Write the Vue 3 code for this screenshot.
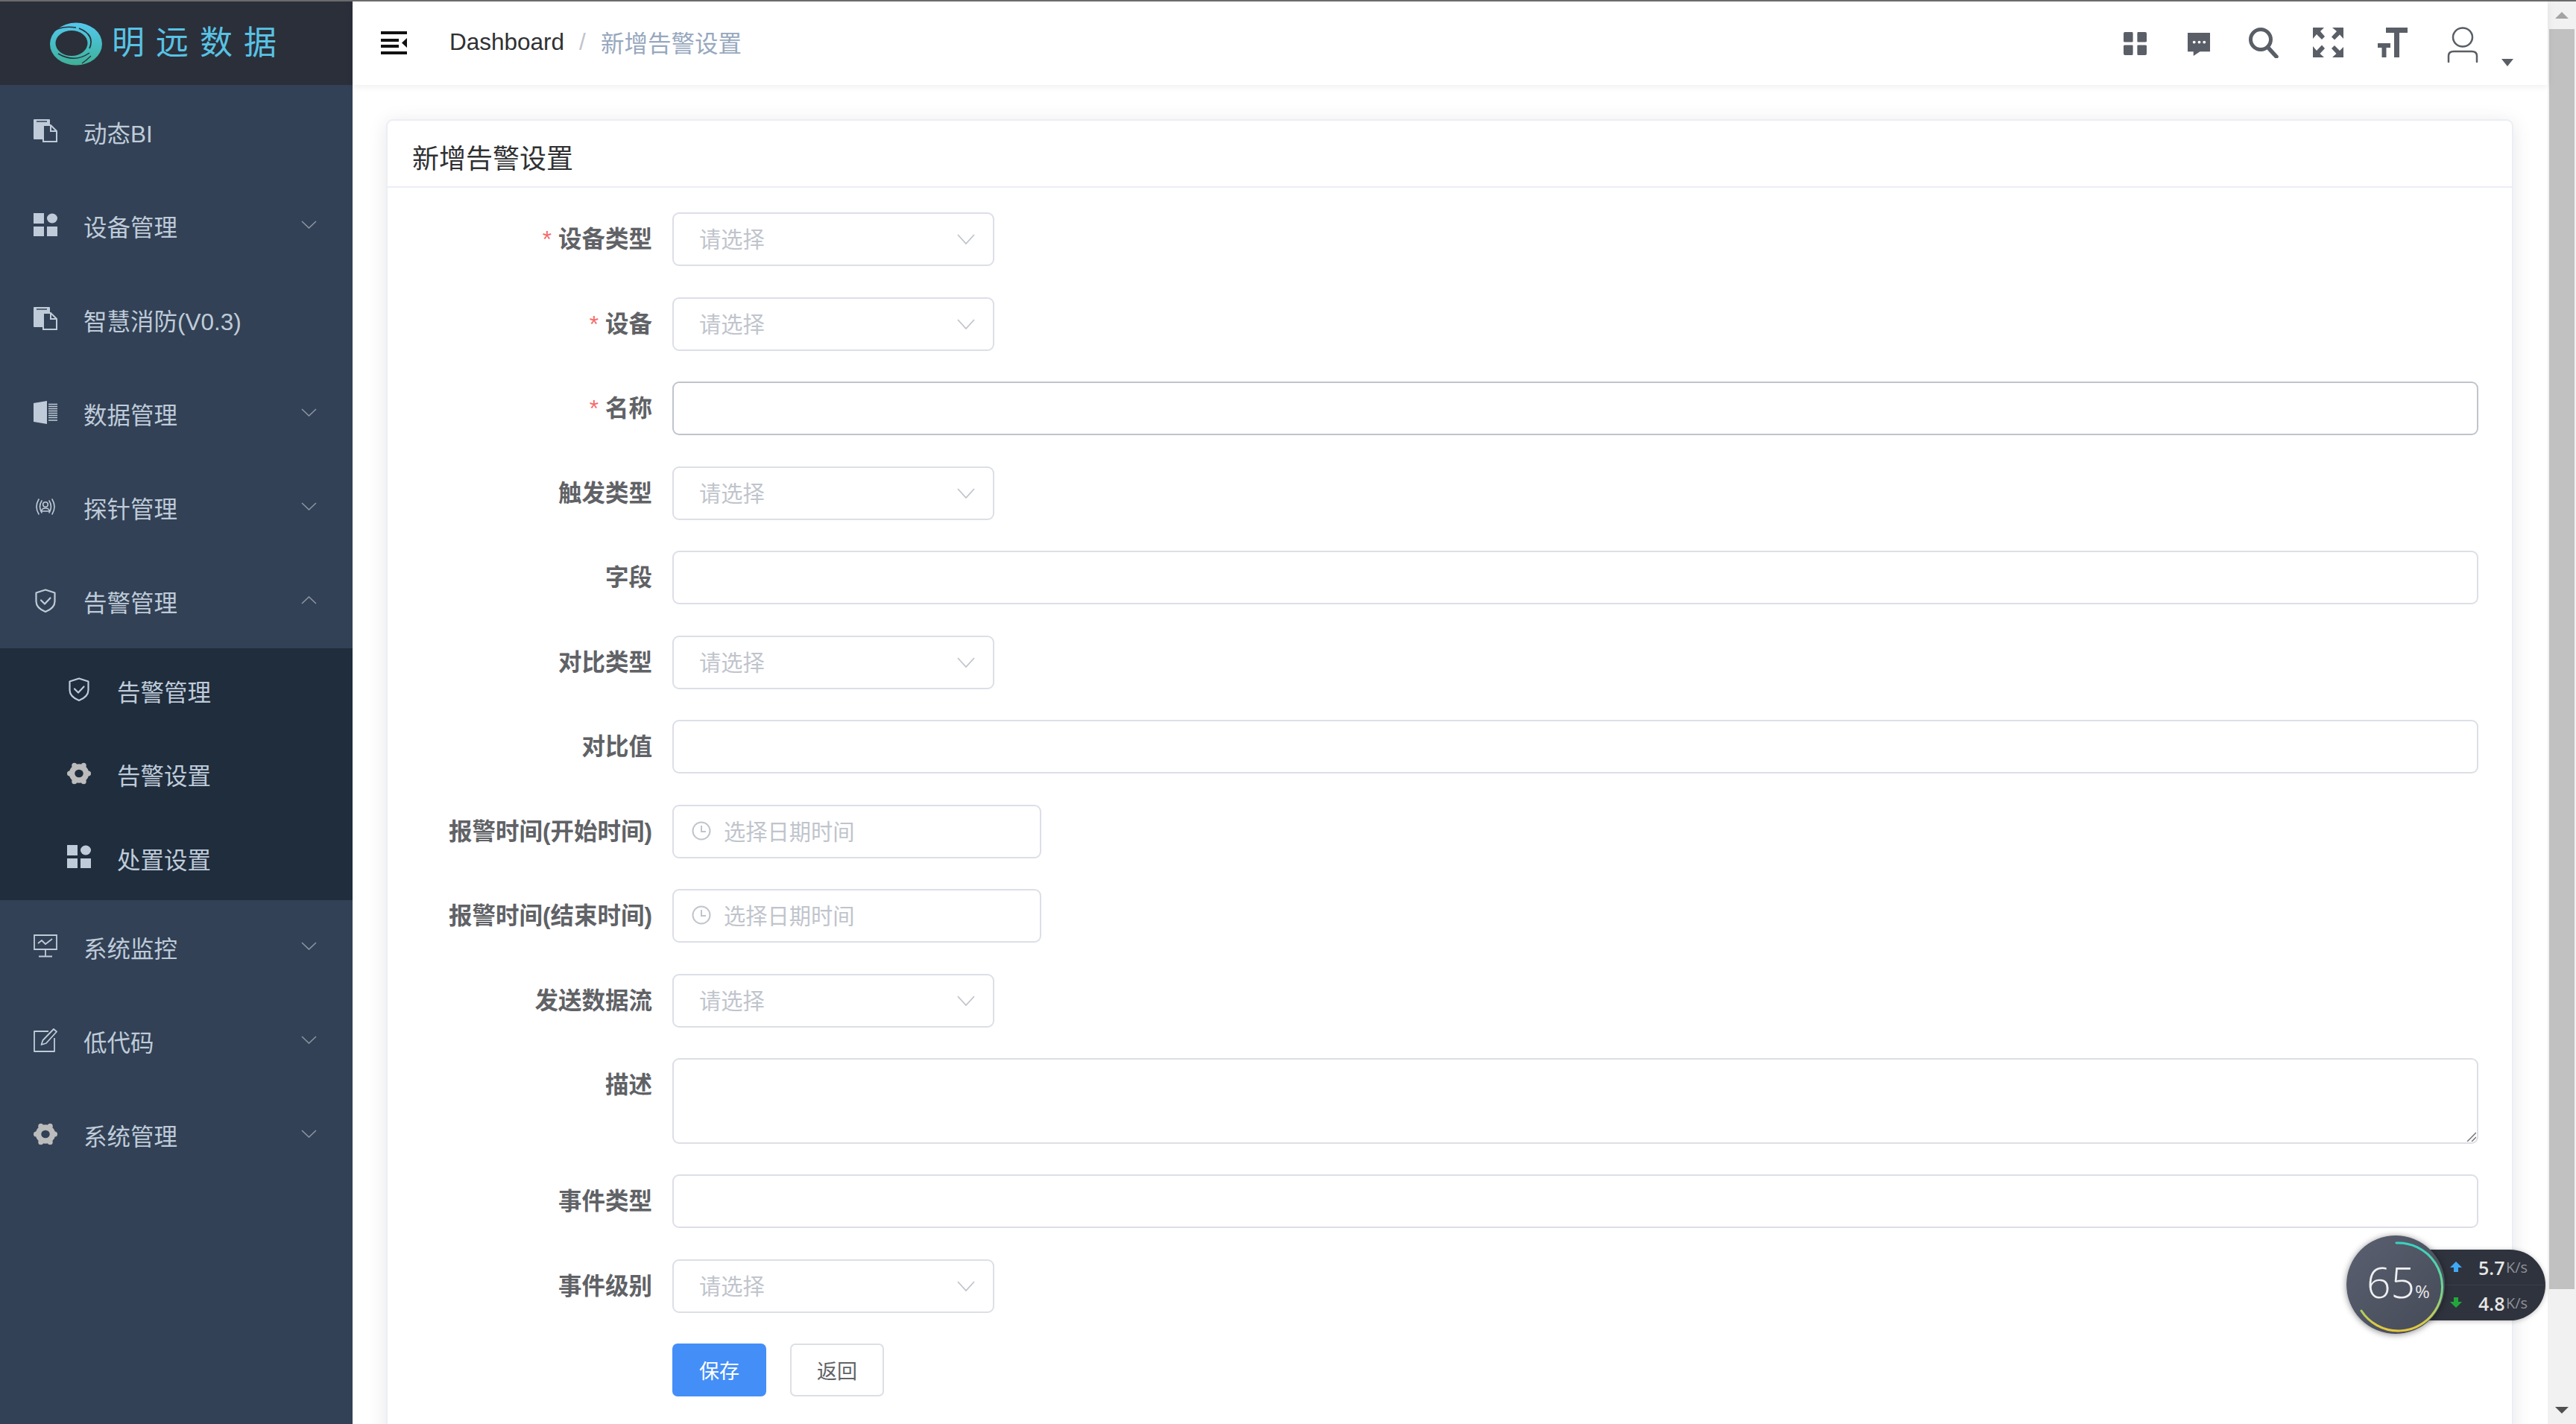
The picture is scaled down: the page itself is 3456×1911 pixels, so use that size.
<script setup>
const menu = [
  { icon: 'doc', label: '动态BI' },
  { icon: 'grid', label: '设备管理', arrow: 'down' },
  { icon: 'doc', label: '智慧消防(V0.3)' },
  { icon: 'book', label: '数据管理', arrow: 'down' },
  { icon: 'probe', label: '探针管理', arrow: 'down' },
  {
    icon: 'shield', label: '告警管理', arrow: 'up',
    children: [
      { icon: 'shield', label: '告警管理' },
      { icon: 'gear', label: '告警设置' },
      { icon: 'grid', label: '处置设置' },
    ],
  },
  { icon: 'monitor', label: '系统监控', arrow: 'down' },
  { icon: 'edit', label: '低代码', arrow: 'down' },
  { icon: 'gear', label: '系统管理', arrow: 'down' },
]
const rows = [
  { label: '设备类型', type: 'select', required: true },
  { label: '设备', type: 'select', required: true },
  { label: '名称', type: 'input', required: true, hover: true },
  { label: '触发类型', type: 'select' },
  { label: '字段', type: 'input' },
  { label: '对比类型', type: 'select' },
  { label: '对比值', type: 'input' },
  { label: '报警时间(开始时间)', type: 'date' },
  { label: '报警时间(结束时间)', type: 'date' },
  { label: '发送数据流', type: 'select' },
  { label: '描述', type: 'textarea' },
  { label: '事件类型', type: 'input' },
  { label: '事件级别', type: 'select' },
]
const tools = ['t-grid', 't-chat', 't-search', 't-full', 't-font']
</script>

<template>
  <div class="root">
    <svg class="defs" width="0" height="0">
      <defs>
        <symbol id="doc" viewBox="0 0 32 32">
          <path fill="currentColor" d="M1 0H21Q22 0 22 1V7H13Q12 7 12 8V27H1Q0 27 0 26V1Q0 0 1 0Z" />
          <path fill="none" stroke="#324155" stroke-width="1.5" d="M4 3H18" />
          <path fill="none" stroke="currentColor" stroke-width="2" d="M13 8H23L31 16V30H13ZM23 8V16H31" />
        </symbol>
        <symbol id="grid" viewBox="0 0 32 32">
          <path fill="currentColor" d="M0 0H14V14H0ZM0 18H14V31H0ZM18 18H32V31H18Z" />
          <ellipse fill="currentColor" cx="25" cy="7" rx="7" ry="6.5" />
        </symbol>
        <symbol id="book" viewBox="0 0 32 32">
          <path fill="currentColor" d="M0 3L18 0V31L0 28Z" />
          <path fill="none" stroke="currentColor" stroke-width="1.4" d="M20 4.5H32M20 7.5H32M20 10.5H32M20 13.5H32M20 16.5H32M20 19.5H32M20 22.5H32M20 26H32" />
        </symbol>
        <symbol id="probe" viewBox="0 0 32 32">
          <g fill="none" stroke="currentColor" stroke-width="1.6" stroke-linecap="round">
            <path d="M7 6Q1 16 7 26M11 8Q6 16 11 24M25 6Q31 16 25 26M21 8Q26 16 21 24" />
            <circle cx="16" cy="13" r="3.3" />
            <path d="M10.5 22Q11 18 16 18Q21 18 21.5 22Z" />
          </g>
        </symbol>
        <symbol id="shield" viewBox="0 0 32 32">
          <g fill="none" stroke="currentColor" stroke-width="2.2" stroke-linejoin="round" stroke-linecap="round">
            <path d="M16 1.5L28.5 5.5V17Q28.5 26 16 31Q3.500 26 3.500 17V5.500Z" />
            <path d="M10 15.500L15 20.500L22.500 12.500" />
          </g>
        </symbol>
        <symbol id="gear" viewBox="0 0 32 32">
          <g fill="#bcbcbc">
            <circle cx="28.500" cy="16" r="3.500" />
            <circle cx="3.500" cy="16" r="3.500" />
            <circle cx="22.250" cy="5.200" r="3.500" />
            <circle cx="9.750" cy="5.200" r="3.500" />
            <circle cx="22.250" cy="26.800" r="3.500" />
            <circle cx="9.750" cy="26.800" r="3.500" />
          </g>
          <ellipse cx="16" cy="16" rx="9.500" ry="9" fill="none" stroke="#bcbcbc" stroke-width="7.500" />
        </symbol>
        <symbol id="monitor" viewBox="0 0 32 32">
          <g fill="none" stroke="currentColor" stroke-width="1.800">
            <path d="M1 1H31V20H1ZM16 20V29M7 29.500H25" />
            <path d="M6 12L11 8L16 13L25 6" />
          </g>
        </symbol>
        <symbol id="edit" viewBox="0 0 32 32">
          <g fill="none" stroke="currentColor" stroke-width="1.800" stroke-linejoin="round">
            <path d="M20 4H1V31H28V13" />
            <path d="M27 1L31 4.500L17 20L10.500 22L12.500 16Z" />
          </g>
        </symbol>
        <symbol id="t-grid" viewBox="0 0 32 32">
          <path fill="currentColor" d="M2 0H12Q13 0 13 2V13Q13 14 12 14H2Q0 14 0 13V2Q0 0 2 0ZM20 0H30Q32 0 32 2V13Q32 14 30 14H20Q19 14 19 13V2Q19 0 20 0ZM2 18H12Q13 18 13 19V30Q13 32 12 32H2Q0 32 0 30V19Q0 18 2 18ZM20 18H30Q32 18 32 19V30Q32 32 30 32H20Q19 32 19 30V19Q19 18 20 18Z" />
        </symbol>
        <symbol id="t-chat" viewBox="0 0 32 32">
          <path fill="currentColor" fill-rule="evenodd" d="M0 0H31V26H17L8 32V26H0ZM9 11A2 2 0 1 0 9 15A2 2 0 1 0 9 11ZM16 11A2 2 0 1 0 16 15A2 2 0 1 0 16 11ZM23 11A2 2 0 1 0 23 15A2 2 0 1 0 23 11Z" />
        </symbol>
        <symbol id="t-search" viewBox="0 0 40 41">
          <g fill="none" stroke="currentColor" stroke-linecap="round">
            <ellipse cx="16" cy="16" rx="13.500" ry="13.500" stroke-width="5" />
            <path d="M26 27L37 39" stroke-width="5.500" />
          </g>
        </symbol>
        <symbol id="t-full" viewBox="0 0 41 40">
          <path fill="currentColor" d="M0 0H15L10 5L16 12L12 16L5 9L0 15ZM41 0V15L36 9.500L29 16.500L25 12.500L32 5L26 0ZM0 40V25L5 31L12 23.500L16 28L9.500 35L15 40ZM41 40H26L31.500 35L25 28L29 24L36 31L41 26Z" />
        </symbol>
        <symbol id="t-font" viewBox="0 0 40 40">
          <path fill="currentColor" d="M11 0H40V7H29V40H22V7H11ZM0 21H17V27H11.500V40H5.500V27H0Z" />
        </symbol>
        <symbol id="t-user" viewBox="0 0 42 48">
          <g fill="none" stroke="currentColor" stroke-width="2.500" stroke-linecap="round">
            <ellipse cx="21" cy="14" rx="13" ry="12.500" />
            <path d="M2 47V39Q2 33 9 33H33Q40 33 40 39V47" />
          </g>
        </symbol>
      </defs>
    </svg>

    <aside class="side">
      <div class="brand">
        <svg class="logo" viewBox="0 0 72 60" width="72" height="60">
          <defs>
            <linearGradient id="lg" x1="0.5" y1="0" x2="0.5" y2="1">
              <stop offset="0" stop-color="#55c8ec" />
              <stop offset="0.55" stop-color="#45bcc0" />
              <stop offset="1" stop-color="#3fb096" />
            </linearGradient>
          </defs>
          <ellipse cx="36" cy="30" rx="35" ry="28.500" fill="url(#lg)" />
          <ellipse cx="30" cy="29" rx="21.500" ry="17" fill="#2b2f3a" />
          <path d="M3 15Q14 5 36 8" fill="none" stroke="#2b2f3a" stroke-width="1.500" />
          <path d="M40 9Q62 18 54 36" fill="none" stroke="#2b2f3a" stroke-width="1.800" />
          <path d="M12 43Q34 56 54 42" fill="none" stroke="#2b2f3a" stroke-width="1.500" />
          <path d="M56 46Q50 52 44 56" fill="none" stroke="#2b2f3a" stroke-width="1.200" />
        </svg>
        <span class="brand-text">明远数据</span>
      </div>
      <nav class="menu">
        <template v-for="m in menu" :key="m.label">
          <div class="item">
            <svg class="ico"><use :href="'#' + m.icon" /></svg>
            <span class="item-text">{{ m.label }}</span>
            <svg v-if="m.arrow" class="chev" :class="{ up: m.arrow === 'up' }" viewBox="0 0 21 11">
              <path d="M1 1L10.500 10L20 1" fill="none" stroke="currentColor" stroke-width="1.600" />
            </svg>
          </div>
          <div v-if="m.children" class="sub">
            <div v-for="c in m.children" :key="c.label" class="sub-item">
              <svg class="ico"><use :href="'#' + c.icon" /></svg>
              <span class="item-text">{{ c.label }}</span>
            </div>
          </div>
        </template>
      </nav>
    </aside>

    <main class="main">
      <header class="top">
        <svg class="burger" viewBox="0 0 35 31">
          <path fill="#111" d="M0 0H35V4H0ZM0 27H35V31H0ZM0 10H24V14H0ZM0 18H24V22H0ZM35 9V22L28 15.500Z" />
        </svg>
        <span class="crumb-a">Dashboard</span>
        <span class="crumb-sep">/</span>
        <span class="crumb-b">新增告警设置</span>
        <div class="tools">
          <svg v-for="t in tools" :key="t" class="tool" :class="t"><use :href="'#' + t" /></svg>
          <svg class="tool t-user"><use href="#t-user" /></svg>
          <i class="caret"></i>
        </div>
      </header>

      <div class="content">
        <section class="card">
          <div class="card-head">新增告警设置</div>
          <form class="form" @submit.prevent>
            <div v-for="r in rows" :key="r.label" class="row" :class="{ tall: r.type === 'textarea' }">
              <label class="lab"><em v-if="r.required">*</em>{{ r.label }}</label>
              <div v-if="r.type === 'select'" class="box select">
                <span class="ph">请选择</span>
                <svg class="sel-chev" viewBox="0 0 24 14">
                  <path d="M1 1L12 13L23 1" fill="none" stroke="#c0c4cc" stroke-width="1.800" />
                </svg>
              </div>
              <div v-else-if="r.type === 'date'" class="box date">
                <svg class="clock" viewBox="0 0 26 26">
                  <circle cx="13" cy="13" r="11.500" fill="none" stroke="#c0c4cc" stroke-width="2" />
                  <path d="M13 6V14H19" fill="none" stroke="#c0c4cc" stroke-width="2" />
                </svg>
                <span class="ph">选择日期时间</span>
              </div>
              <div v-else-if="r.type === 'textarea'" class="box area">
                <svg class="grip" viewBox="0 0 14 14">
                  <path d="M14 2L2 14M14 8L8 14" stroke="#777" stroke-width="1.500" fill="none" />
                </svg>
              </div>
              <div v-else class="box wide" :class="{ hover: r.hover }"></div>
            </div>
            <div class="row actions">
              <button type="button" class="btn primary">保存</button>
              <button type="button" class="btn">返回</button>
            </div>
          </form>
        </section>
      </div>
    </main>

    <div class="bar">
      <div class="bar-btn"><i class="tri-up"></i></div>
      <div class="thumb"></div>
      <div class="bar-btn end"><i class="tri-down"></i></div>
    </div>

    <div class="speed">
      <div class="pill">
        <div class="pill-row">
          <svg class="arr" viewBox="0 0 16 14"><path fill="#3fa9f5" d="M8 0L16 8H11V14H5V8H0Z" /></svg>
          <b>5.7</b><small>K/s</small>
        </div>
        <div class="pill-row">
          <svg class="arr" viewBox="0 0 16 14"><path fill="#22a83a" d="M8 14L16 6H11V0H5V6H0Z" /></svg>
          <b>4.8</b><small>K/s</small>
        </div>
      </div>
      <div class="dial">
        <svg class="arc" viewBox="0 0 132 132">
          <defs>
            <linearGradient id="ag" gradientUnits="userSpaceOnUse" x1="66" y1="7" x2="66" y2="125">
              <stop offset="0" stop-color="#36d2c4" />
              <stop offset="0.55" stop-color="#6ed68f" />
              <stop offset="1" stop-color="#e6c83a" />
            </linearGradient>
          </defs>
          <path d="M67 10A59 59 0 1 1 20 101" fill="none" stroke="url(#ag)" stroke-width="3" stroke-linecap="round" />
        </svg>
        <span class="pct">65</span><span class="pct-s">%</span>
      </div>
    </div>
  </div>
</template>

<style>
html, body { margin: 0; padding: 0; overflow: hidden; background: #fff; }
</style>

<style scoped>
.root {
  position: relative;
  display: flex;
  width: 3456px;
  height: 1911px;
  box-sizing: border-box;
  border-top: 2px solid #6b6b6b;
  overflow: hidden;
  font-family: "Liberation Sans", "Noto Sans CJK SC", sans-serif;
  font-size: 31.5px;
  color: #606266;
  background: #fff;
}
.defs { position: absolute; }

.side { flex: 0 0 473px; background: #324155; display: flex; flex-direction: column; }
.brand { height: 112px; background: #2b2f3a; display: flex; align-items: center; padding-left: 66px; box-sizing: border-box; }
.logo { flex: none; margin-top: 1px; }
.brand-text { margin-left: 12px; font-size: 44px; letter-spacing: 15px; color: #58c3e4; line-height: 1; font-weight: 400; }
.menu { display: flex; flex-direction: column; }
.item { position: relative; height: 126px; display: flex; align-items: center; padding-left: 45px; color: #bfcbd9; }
.sub { background: #1f2d3d; }
.sub-item { height: 112.5px; display: flex; align-items: center; padding-left: 90px; color: #bfcbd9; }
.ico { flex: none; width: 32px; height: 32px; margin-right: 35px; margin-top: -2px; }
.item-text { line-height: 1; position: relative; top: 4px; }
.chev { position: absolute; left: 404px; top: 56px; width: 21px; height: 11px; color: #8b95a3; }
.chev.up { transform: rotate(180deg); }

.main { flex: 1; min-width: 0; display: flex; flex-direction: column; }
.top {
  flex: none;
  position: relative;
  z-index: 1;
  height: 112px;
  display: flex;
  align-items: center;
  padding-left: 38px;
  padding-right: 45px;
  box-shadow: 0 2px 9px rgba(0, 21, 41, .08);
  background: #fff;
}
.burger { flex: none; width: 35px; height: 31px; margin-right: 57px; margin-top: -2px; }
.crumb-a { color: #303133; position: relative; top: -2px; }
.crumb-sep { color: #c0c4cc; margin: 0 20px; position: relative; top: -2px; }
.crumb-b { color: #97a8be; position: relative; top: -2px; }
.tools { margin-left: auto; display: flex; align-items: flex-start; height: 112px; position: relative; width: 524px; }
.tool { position: absolute; color: #5a5e66; }
.t-grid { left: 0; top: 41px; width: 31px; height: 31px; }
.t-chat { left: 86px; top: 41px; width: 31px; height: 33px; }
.t-search { left: 168px; top: 35px; width: 40px; height: 41px; }
.t-full { left: 254px; top: 35px; width: 41px; height: 40px; }
.t-font { left: 341px; top: 35px; width: 40px; height: 40px; }
.t-user { left: 434px; top: 34px; width: 42px; height: 48px; }
.caret { position: absolute; left: 507px; top: 77px; width: 0; height: 0; border: 8.500px solid transparent; border-top: 10px solid #5a5e66; border-bottom: 0; }

.content { flex: 1; min-height: 0; padding: 46px 46px 0 45px; overflow: hidden; }
.card { border: 2px solid #ebeef5; border-radius: 9px; box-shadow: 0 4px 27px rgba(0, 0, 0, .1); background: #fff; height: 1900px; box-sizing: border-box; }
.card-head { box-sizing: border-box; padding: 8px 0 0 33px; display: flex; align-items: center; font-size: 36px; color: #303133; border-bottom: 2px solid #ebeef5; height: 90px; }
.form { padding: 33px 45px 0 0; }
.row { display: flex; height: 72px; margin-bottom: 41.500px; }
.row.tall { height: 115px; margin-bottom: 41px; }
.lab { flex: none; width: 382px; box-sizing: border-box; padding-right: 27px; text-align: right; line-height: 72px; font-weight: 700; color: #606266; white-space: nowrap; }
.lab em { font-style: normal; font-weight: 400; color: #f56c6c; margin-right: 9px; }
.box { box-sizing: border-box; border: 2px solid #dcdfe6; border-radius: 9px; background: #fff; position: relative; display: flex; align-items: center; }
.select { width: 432px; padding-left: 34px; }
.date { width: 495px; padding-left: 24px; }
.wide, .area { flex: 1; }
.hover { border-color: #c0c4cc; }
.ph { color: #c0c4cc; font-size: 29.250px; line-height: 1; position: relative; top: 2px; }
.sel-chev { position: absolute; right: 24px; top: 27px; width: 24px; height: 14px; }
.clock { flex: none; width: 26px; height: 26px; margin-right: 17px; margin-top: -2px; }
.grip { position: absolute; right: 1px; bottom: 1px; width: 14px; height: 14px; }
.actions { padding-left: 382px; }
.btn { width: 126px; height: 71px; box-sizing: border-box; border: 2px solid #dcdfe6; border-radius: 7px; background: #fff; color: #606266; font: inherit; font-size: 27px; padding: 0; margin-right: 32px; }
.btn.primary { background: #448ef7; border-color: #448ef7; color: #fff; }

.bar { flex: 0 0 38px; background: #f1f1f1; display: flex; flex-direction: column; align-items: center; }
.bar-btn { height: 37px; flex: none; display: flex; align-items: center; justify-content: center; }
.bar-btn.end { margin-top: auto; height: 38px; }
.tri-up { width: 0; height: 0; border: 9px solid transparent; border-bottom: 9px solid #a3a3a3; border-top: 0; }
.tri-down { width: 0; height: 0; border: 9px solid transparent; border-top: 9px solid #505050; border-bottom: 0; }
.thumb { width: 34px; height: 1691px; background: #c1c1c1; flex: none; }

.speed { position: absolute; left: 3148px; top: 1656px; width: 268px; height: 134px; }
.pill {
  position: absolute; left: 40px; top: 19px; width: 227px; height: 95px;
  background: #2f333d; border-radius: 0 48px 48px 0; box-shadow: 0 1px 6px rgba(0, 0, 0, .25);
  display: flex; flex-direction: column; color: #f2f2f2;
}
.pill-row { flex: 1; display: flex; align-items: center; padding-left: 100px; position: relative; box-sizing: border-box; }
.pill-row + .pill-row { border-top: 1px solid #3b3f4a; }
.arr { position: absolute; left: 99px; top: 16px; width: 16px; height: 14px; }
.pill-row b { position: absolute; left: 137px; font-size: 25px; font-weight: 600; font-family: "Open Sans", sans-serif; color: #e6e6e6; }
.pill-row small { position: absolute; left: 174px; font-size: 20px; color: #8d919a; font-family: "Open Sans", sans-serif; }
.dial {
  position: absolute; left: 0; top: 0; width: 132px; height: 132px; border-radius: 50%;
  background: linear-gradient(135deg, #5a6070, #454a57);
  box-shadow: 0 1px 8px rgba(0, 0, 0, .45);
}
.arc { position: absolute; inset: 0; width: 132px; height: 132px; }
.pct { position: absolute; left: 27px; top: 22px; font-family: "Open Sans", sans-serif; font-weight: 300; font-size: 57px; line-height: 80px; color: #eef0f2; }
.pct-s { position: absolute; left: 92px; top: 62px; font-family: "Open Sans", sans-serif; font-weight: 400; font-size: 24px; line-height: 26px; color: #e6e6e6; }
</style>
